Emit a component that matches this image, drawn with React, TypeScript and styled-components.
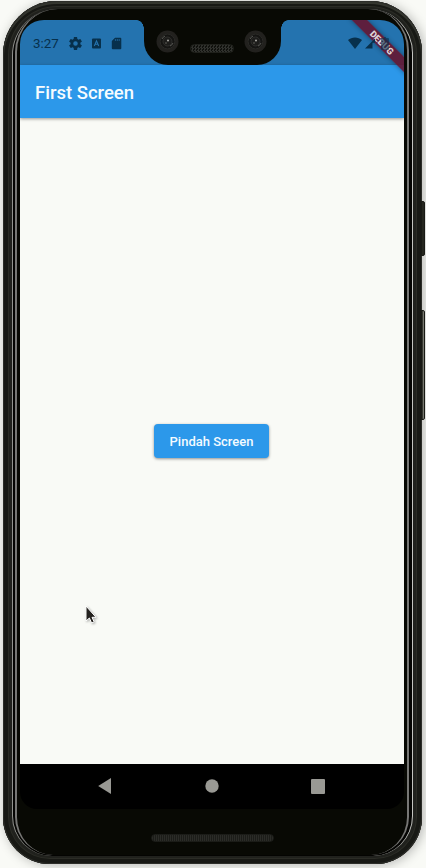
import React from "react";
import styled, { createGlobalStyle } from "styled-components";

const GlobalStyle = createGlobalStyle`
  * { box-sizing: border-box; }
  body { margin: 0; background: #f9faf6; font-family: Roboto, "Liberation Sans", sans-serif; overflow: hidden; }
  svg { display: block; }
`;

const Stage = styled.main`
  position: relative;
  width: 426px;
  height: 868px;
  padding: 1px 4px 4px 3px;
  overflow: hidden;
  background: #f9faf6;
`;

const SideButton = styled.div<{ $top: number; $height: number; $lit?: boolean }>`
  position: absolute;
  z-index: 1;
  right: 1px;
  top: ${(p) => p.$top}px;
  width: 4px;
  height: ${(p) => p.$height}px;
  border-radius: 0 2px 2px 0;
  background: ${(p) => (p.$lit ? "linear-gradient(90deg, #171813 0, #77786f 1.5px, #25261f 3px)" : "#25261f")};
  border: 1px solid #191a15;
`;

const Body = styled.div`
  position: relative;
  width: 419px;
  height: 863px;
  padding: 8px 9px 8px 9px;
  border-radius: 54px 52px 47px 47px;
  background: #20211d;
  box-shadow:
    inset 0 0 0 1px #2d2e2a,
    inset 0 2px 0 1px #34362f,
    inset 0 0 0 5px #181915,
    inset 0 0 0 6px #2b2c26,
    2px 1px 12px rgba(0, 0, 0, 0.28);
`;

const OuterRim = styled.div`
  width: 401px;
  height: 847px;
  padding: 0 2px;
  border: solid #92938f;
  border-width: 0 1px 0 1px;
  border-right-color: #c4c5c1;
  border-radius: 46px 44px 40px 40px;
  background: #040402;
`;

const InnerRim = styled.div`
  width: 394px;
  height: 846px;
  padding: 11px 2px 0 2px;
  border: solid #777775;
  border-width: 0 2px 0 2px;
  border-radius: 43px 41px 38px 38px;
  background: #080904;
`;

const Screen = styled.div`
  position: relative;
  display: flex;
  flex-direction: column;
  width: 384px;
  height: 789px;
  margin-left: 1px;
  overflow: hidden;
  border-radius: 24px 24px 17px 17px;
`;

const StatusBar = styled.div`
  display: flex;
  align-items: center;
  flex: 0 0 45px;
  padding: 1px 15px 0 13px;
  background: #2473af;
  color: #07304c;
`;

const Clock = styled.span`
  width: 36px;
  padding-top: 1px;
  font-size: 13.4px;
  line-height: 16px;
`;

const StatusIcons = styled.div`
  display: flex;
  align-items: center;
  gap: 7.5px;
`;

const Signals = styled.div`
  position: relative;
  z-index: 4;
  display: flex;
  align-items: center;
  margin-left: auto;
  gap: 3px;
`;

const Battery = styled.svg`
  margin-left: 3px;
  opacity: 0.6;
`;

const Notch = styled.div`
  position: absolute;
  z-index: 2;
  top: 0;
  left: 124px;
  display: flex;
  align-items: center;
  justify-content: space-between;
  width: 137px;
  height: 45px;
  padding: 0 14px 3px 12px;
  border-radius: 0 0 24px 24px;
  background: #080904;
  &::before, &::after {
    content: "";
    position: absolute;
    top: 0;
    width: 7px;
    height: 9px;
  }
  &::before { right: 100%; background: radial-gradient(ellipse 7px 9px at 0 100%, transparent 94%, #080904 100%); }
  &::after { left: 100%; background: radial-gradient(ellipse 7px 9px at 100% 100%, transparent 94%, #080904 100%); }
`;

const Grille = styled.div<{ $wide?: boolean }>`
  width: ${(p) => (p.$wide ? 123 : 44)}px;
  height: ${(p) => (p.$wide ? 8 : 9)}px;
  margin: ${(p) => (p.$wide ? "25px auto 0" : "14px 0 0")};
  border: 1px solid ${(p) => (p.$wide ? "#1b1c18" : "#20211c")};
  border-radius: 5px;
  background: ${(p) =>
    p.$wide
      ? "repeating-linear-gradient(90deg, #2b2c28 0 1px, #1c1d19 1px 2px)"
      : "repeating-conic-gradient(#30312d 0 25%, #10110d 0 50%) 0 0 / 3px 3px"};
`;

const AppBar = styled.header`
  position: relative;
  display: flex;
  align-items: center;
  flex: 0 0 53px;
  padding-left: 15px;
  background: #2c98ea;
  box-shadow: 0 1px 3px rgba(0, 0, 0, 0.4);
`;

const Title = styled.h1`
  margin: 2px 0 0;
  color: #f6fcff;
  font-size: 18.5px;
  font-weight: 500;
  line-height: 24px;
`;

const Content = styled.div`
  display: flex;
  align-items: center;
  justify-content: center;
  flex: 1;
  background: #f9faf6;
`;

const ActionButton = styled.button`
  width: 115px;
  height: 34px;
  margin-right: 1px;
  padding: 1px 0 0;
  border: 0;
  border-radius: 4px;
  background: #2c98ea;
  box-shadow: 0 1px 3px rgba(0, 0, 0, 0.42);
  color: #f4fbff;
  font: 500 13px/33px Roboto, "Liberation Sans", sans-serif;
  white-space: nowrap;
`;

const Navigation = styled.nav`
  display: flex;
  align-items: center;
  justify-content: space-between;
  flex: 0 0 45px;
  padding: 0 79px 1px 78px;
  background: #000;
`;

const DebugRibbon = styled.div`
  position: absolute;
  z-index: 3;
  top: 16.5px;
  left: 321.5px;
  width: 80px;
  height: 11px;
  transform: rotate(45deg);
  background: rgba(104, 18, 43, 0.86);
  box-shadow: 0 0 5px rgba(0, 0, 0, 0.4);
  color: #dfd3d7;
  font-size: 9.2px;
  font-weight: 900;
  line-height: 11px;
  text-align: center;
`;

const Pointer = styled.svg`
  position: absolute;
  left: 81.5px;
  top: 603px;
  filter: drop-shadow(1px 1px 1px rgba(0, 0, 0, 0.3));
`;

const Lens = () => (
  <svg width="23" height="23" viewBox="0 0 23 23">
    <circle cx="11.5" cy="11.5" r="11" fill="#22211e" />
    <circle cx="11.5" cy="11.5" r="7.4" fill="#151513" stroke="#2a2a27" />
    <circle cx="11.5" cy="11.5" r="4.5" fill="#1d1d1b" stroke="#353532" strokeWidth=".8" />
    <path d="M6 9a6 6 0 0 1 3-3M14 16a5 5 0 0 0 3-3" fill="none" stroke="#5b5b57" />
    <circle cx="12" cy="10.5" r="1" fill="#aaa9a3" />
    <circle cx="10" cy="13" r=".8" fill="#666660" />
  </svg>
);

export default function App() {
  return (
    <>
      <GlobalStyle />
      <Stage>
        <SideButton $top={201} $height={55} />
        <SideButton $top={310} $height={110} $lit />
        <Body>
          <OuterRim>
            <InnerRim>
              <Screen>
                <StatusBar>
                  <Clock>3:27</Clock>
                  <StatusIcons>
                    <svg width="13" height="13" viewBox="2 2 20 20" fill="currentColor">
                      <path d="M19.43 12.98c.04-.32.07-.64.07-.98s-.03-.66-.07-.98l2.11-1.65c.19-.15.24-.42.12-.64l-2-3.46c-.12-.22-.39-.3-.61-.22l-2.49 1c-.52-.4-1.08-.73-1.69-.98l-.38-2.65A.49.49 0 0 0 14 2h-4c-.25 0-.46.18-.49.42l-.38 2.65c-.61.25-1.17.59-1.69.98l-2.49-1c-.23-.09-.49 0-.61.22l-2 3.46c-.13.22-.07.49.12.64l2.11 1.65c-.04.32-.07.65-.07.98s.03.66.07.98l-2.11 1.65c-.19.15-.24.42-.12.64l2 3.46c.12.22.39.3.61.22l2.49-1c.52.4 1.08.73 1.69.98l.38 2.65c.03.24.24.42.49.42h4c.25 0 .46-.18.49-.42l.38-2.65c.61-.25 1.17-.59 1.69-.98l2.49 1c.23.09.49 0 .61-.22l2-3.46c.12-.22.07-.49-.12-.64zM12 15.5A3.5 3.5 0 1 1 12 8.5a3.5 3.5 0 0 1 0 7z" />
                    </svg>
                    <svg width="13" height="13" viewBox="0 0 13 13">
                      <rect x="2" y="1.5" width="9" height="10" rx="1" fill="currentColor" />
                      <path d="M4.3 9 6.5 3.8 8.7 9M5.1 7.3h2.8" fill="none" stroke="#2473af" strokeWidth="1.1" />
                    </svg>
                    <svg width="13" height="13" viewBox="0 0 13 13">
                      <path d="M5 .8h5.3a1 1 0 0 1 1 1v9.4a1 1 0 0 1-1 1H2.8a1 1 0 0 1-1-1V4z" fill="currentColor" />
                      <path d="M5.4 2v2M7.3 2v2M9.2 2v2" stroke="#2473af" strokeWidth=".7" />
                    </svg>
                  </StatusIcons>
                  <Signals>
                    <svg width="14" height="12" viewBox="0 0 15 12" preserveAspectRatio="none" fill="currentColor">
                      <path d="M0 3C4-.5 11-.5 15 3L7.5 12z" />
                    </svg>
                    <svg width="10" height="11" viewBox="0 0 12 12" fill="currentColor">
                      <path d="M0 12 12 0v5H9v7z" />
                    </svg>
                    <Battery width="8" height="13" viewBox="0 0 8 13" fill="currentColor">
                      <path d="M2 1h1V0h2v1h2q1 0 1 1v10q0 1-1 1H1q-1 0-1-1V2q0-1 1-1z" />
                    </Battery>
                  </Signals>
                </StatusBar>
                <Notch>
                  <Lens />
                  <Grille />
                  <Lens />
                </Notch>
                <AppBar>
                  <Title>First Screen</Title>
                </AppBar>
                <Content>
                  <ActionButton>Pindah Screen</ActionButton>
                </Content>
                <Navigation>
                  <svg width="14" height="16" viewBox="0 0 14 16"><path d="M13 0v16L.2 8z" fill="#999994" /></svg>
                  <svg width="14" height="14" viewBox="0 0 14 14"><circle cx="7" cy="7" r="6.7" fill="#999994" /></svg>
                  <svg width="14" height="15" viewBox="0 0 14 15"><rect width="14" height="15" rx="1" fill="#999994" /></svg>
                </Navigation>
                <DebugRibbon>DEBUG</DebugRibbon>
              </Screen>
              <Grille $wide />
            </InnerRim>
          </OuterRim>
        </Body>
        <Pointer width="16" height="24" viewBox="0 0 16 24">
          <path d="M4 3v15l3.4-3 2.2 5 2.6-1.1-2.2-4.6H14z" fill="#25221f" stroke="#fff" strokeWidth="1" />
        </Pointer>
      </Stage>
    </>
  );
}
